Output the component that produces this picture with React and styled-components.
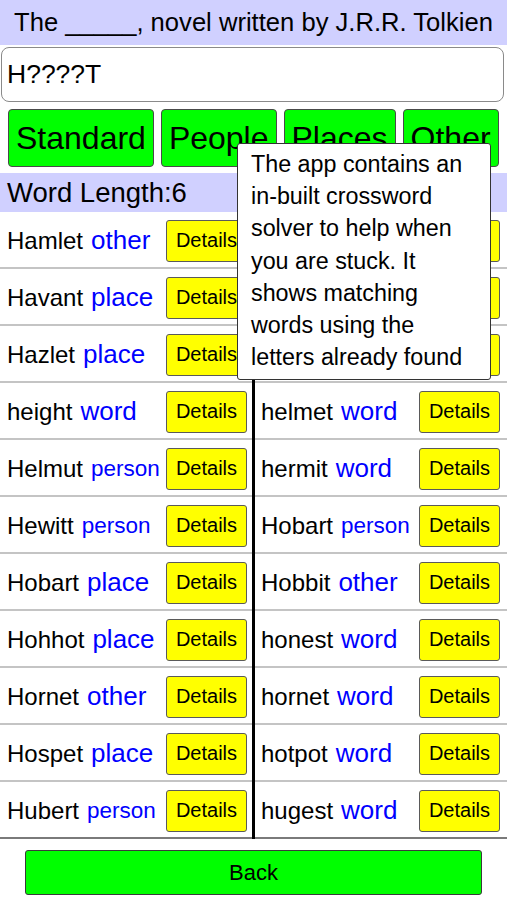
import React from "react";
import styled, { createGlobalStyle } from "styled-components";

const Global = createGlobalStyle`
  html, body { margin: 0; padding: 0; background: #ffffff; }
  body { font-family: "Liberation Sans", Arial, sans-serif; color: #000; }
  * { box-sizing: border-box; }
`;

const Page = styled.div`
  position: relative;
  width: 507px;
  height: 900px;
  overflow: hidden;
  display: flex;
  flex-direction: column;
`;

const Clue = styled.div`
  height: 45px;
  background: #d0d0ff;
  display: flex;
  align-items: center;
  justify-content: center;
  font-size: 25.6px;
  white-space: nowrap;
`;

const Pattern = styled.div`
  margin: 2px 3px 0 1px;
  height: 55px;
  border: 1px solid #8a8a8a;
  border-radius: 8px;
  display: flex;
  align-items: center;
  padding: 0 5px;
  font-size: 26.5px;
`;

const Tabs = styled.div`
  display: flex;
  gap: 7px;
  padding: 0 8px;
  margin-top: 7px;
`;

const Tab = styled.div`
  height: 58px;
  padding: 0 7px;
  background: #00ff00;
  border: 1px solid #4a4a4a;
  border-radius: 4px;
  display: flex;
  align-items: center;
  justify-content: center;
  font-size: 32px;
  white-space: nowrap;
`;

const LengthBar = styled.div`
  margin-top: 6px;
  height: 39px;
  background: #d0d0ff;
  display: flex;
  align-items: center;
  padding-left: 7px;
  font-size: 27.5px;
`;

const List = styled.div`
  display: flex;
  flex-direction: column;
`;

const Row = styled.div`
  display: grid;
  grid-template-columns: 252px 3px 252px;
  height: 57px;
`;

const Cell = styled.div`
  display: flex;
  align-items: center;
  border-bottom: 2px solid ${(p) => (p.$last ? "#7a7a7a" : "#c4c4c4")};
  padding: ${(p) => (p.$right ? "2px 7px 0 6px" : "2px 5px 0 7px")};
  white-space: nowrap;
`;

const Divider = styled.div`
  background: #000;
`;

const Word = styled.span`
  font-size: 24px;
`;

const Kind = styled.span`
  color: #0000ff;
  font-size: ${(p) => p.$size}px;
  margin-left: 8px;
`;

const Details = styled.div`
  margin-left: auto;
  width: 81px;
  height: 42px;
  background: #ffff00;
  border: 1px solid #5a5a5a;
  border-radius: 3px;
  display: flex;
  align-items: center;
  justify-content: center;
  font-size: 20px;
`;

const Footer = styled.div`
  padding: 11px 25px 0;
`;

const Back = styled.div`
  height: 45px;
  background: #00ff00;
  border: 1px solid #3a3a3a;
  border-radius: 3px;
  display: flex;
  align-items: center;
  justify-content: center;
  font-size: 22px;
`;

const Tip = styled.div`
  position: absolute;
  top: 143px;
  left: 237px;
  width: 254px;
  height: 237px;
  background: #ffffff;
  border: 1px solid #333;
  border-radius: 3px;
  padding: 4px 0 0 13px;
  font-size: 23.3px;
  line-height: 32.2px;
`;

const TipLine = styled.div`
  white-space: nowrap;
`;

const kindSize = { word: 26, place: 26, other: 26, person: 22.5 };

const rows = [
  [["Hamlet", "other"], ["harlot", "word"]],
  [["Havant", "place"], ["haslet", "word"]],
  [["Hazlet", "place"], ["Hebert", "person"]],
  [["height", "word"], ["helmet", "word"]],
  [["Helmut", "person"], ["hermit", "word"]],
  [["Hewitt", "person"], ["Hobart", "person"]],
  [["Hobart", "place"], ["Hobbit", "other"]],
  [["Hohhot", "place"], ["honest", "word"]],
  [["Hornet", "other"], ["hornet", "word"]],
  [["Hospet", "place"], ["hotpot", "word"]],
  [["Hubert", "person"], ["hugest", "word"]],
];

const tipLines = [
  "The app contains an",
  "in-built crossword",
  "solver to help when",
  "you are stuck. It",
  "shows matching",
  "words using the",
  "letters already found",
];

function Entry({ word, kind, right, last }) {
  return (
    <Cell $right={right} $last={last}>
      <Word>{word}</Word>
      <Kind $size={kindSize[kind]}>{kind}</Kind>
      <Details>Details</Details>
    </Cell>
  );
}

export default function App() {
  return (
    <Page>
      <Global />
      <Clue>The _____, novel written by J.R.R. Tolkien</Clue>
      <Pattern>H????T</Pattern>
      <Tabs>
        <Tab>Standard</Tab>
        <Tab>People</Tab>
        <Tab>Places</Tab>
        <Tab>Other</Tab>
      </Tabs>
      <LengthBar>Word Length:6</LengthBar>
      <List>
        {rows.map(([l, r], i) => {
          const last = i === rows.length - 1;
          return (
            <Row key={i}>
              <Entry word={l[0]} kind={l[1]} last={last} />
              <Divider />
              <Entry word={r[0]} kind={r[1]} right last={last} />
            </Row>
          );
        })}
      </List>
      <Footer>
        <Back>Back</Back>
      </Footer>
      <Tip>
        {tipLines.map((t) => (
          <TipLine key={t}>{t}</TipLine>
        ))}
      </Tip>
    </Page>
  );
}
